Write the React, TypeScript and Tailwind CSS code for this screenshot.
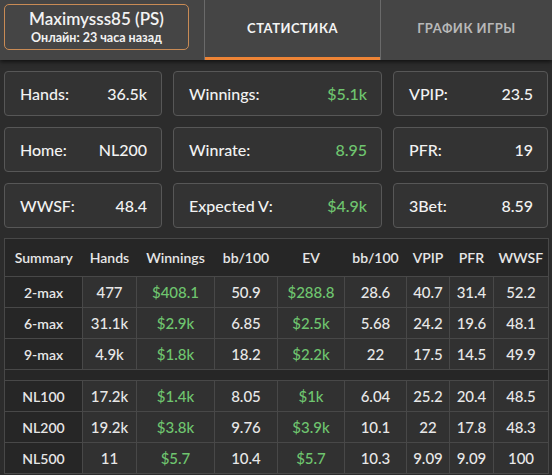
import React from "react";

const cards: [string, string, boolean][] = [
  ["Hands:", "36.5k", false],
  ["Winnings:", "$5.1k", true],
  ["VPIP:", "23.5", false],
  ["Home:", "NL200", false],
  ["Winrate:", "8.95", true],
  ["PFR:", "19", false],
  ["WWSF:", "48.4", false],
  ["Expected V:", "$4.9k", true],
  ["3Bet:", "8.59", false],
];

const headers = ["Summary", "Hands", "Winnings", "bb/100", "EV", "bb/100", "VPIP", "PFR", "WWSF"];
const widths = [78, 54, 78, 63, 67, 62, 43, 44, 55];

const group1 = [
  ["2-max", "477", "$408.1", "50.9", "$288.8", "28.6", "40.7", "31.4", "52.2"],
  ["6-max", "31.1k", "$2.9k", "6.85", "$2.5k", "5.68", "24.2", "19.6", "48.1"],
  ["9-max", "4.9k", "$1.8k", "18.2", "$2.2k", "22", "17.5", "14.5", "49.9"],
];
const group2 = [
  ["NL100", "17.2k", "$1.4k", "8.05", "$1k", "6.04", "25.2", "20.4", "48.5"],
  ["NL200", "19.2k", "$3.8k", "9.76", "$3.9k", "10.1", "22", "17.8", "48.3"],
  ["NL500", "11", "$5.7", "10.4", "$5.7", "10.3", "9.09", "9.09", "100"],
];

function Row({ r }: { r: string[] }) {
  return (
    <tr className="h-[31px]">
      {r.map((c, i) => (
        <td
          key={i}
          className={
            "border border-[#484848] text-center p-0 " +
            (i === 0
              ? "bg-[#262626] text-[14px] font-semibold text-[#e6e6e6]"
              : "bg-[#313131] text-[15px] font-medium " + (i === 2 || i === 4 ? "text-[#6fc56f]" : "text-[#e8e8e8]"))
          }
        >
          {c}
        </td>
      ))}
    </tr>
  );
}

export default function App() {
  return (
    <div
      className="w-[552px] h-[475px] bg-[#2c2c2c] overflow-hidden"
      style={{ fontFamily: "Lato, 'Noto Sans', sans-serif" }}
    >
      <div className="h-[60px] bg-[#454545] flex relative shadow-[0_2px_4px_rgba(0,0,0,0.6)]">
        <div className="ml-[4px] mt-[4px] w-[185px] h-[46px] border border-[#c98b55] rounded-[5px] flex flex-col items-center justify-center">
          <div className="text-[17px] font-semibold text-[#f2f2f2] leading-[19px]">Maximysss85 (PS)</div>
          <div className="text-[12.5px] font-bold text-[#f2f2f2] leading-[16px] mt-[2px]">Онлайн: 23 часа назад</div>
        </div>
        <div className="ml-[15px] w-[176px] h-full border-l border-[#6a6a6a] flex items-center justify-center relative">
          <span className="text-[13px] font-bold tracking-[0.5px] text-[#f4f4f4] pb-[3px]">СТАТИСТИКА</span>
          <div className="absolute left-0 right-0 bottom-0 h-[3px] bg-[#ee8436]" />
        </div>
        <div className="flex-1 h-full border-l border-[#6a6a6a] flex items-center justify-center">
          <span className="text-[13px] font-bold tracking-[0.5px] text-[#b8b8b8] pb-[3px]">ГРАФИК ИГРЫ</span>
        </div>
      </div>

      <div className="px-[4px] pt-[11px]">
        <div className="grid grid-cols-[158px_209px_155px] gap-x-[11px] gap-y-[11px]">
          {cards.map(([l, v, g], i) => (
            <div
              key={i}
              className="h-[45px] bg-[#333333] border border-[#575757] rounded-[4px] flex items-center justify-between pl-[15px] pr-[14px]"
            >
              <span className="text-[16px] font-medium text-[#f2f2f2]">{l}</span>
              <span className={"text-[16px] font-medium " + (g ? "text-[#6fc56f]" : "text-[#f2f2f2]")}>{v}</span>
            </div>
          ))}
        </div>

        <table className="mt-[10px] border-collapse table-fixed w-[544px]">
          <colgroup>
            {widths.map((w, i) => (
              <col key={i} style={{ width: w }} />
            ))}
          </colgroup>
          <thead>
            <tr className="h-[38px] bg-[#262626]">
              {headers.map((h, i) => (
                <th
                  key={i}
                  className="border-y border-[#484848] first:border-l last:border-r text-center text-[14px] font-semibold text-[#e6e6e6] p-0"
                >
                  {h}
                </th>
              ))}
            </tr>
          </thead>
          <tbody>
            {group1.map((r, i) => (
              <Row key={i} r={r} />
            ))}
            <tr className="h-[11px]">
              <td colSpan={9} className="bg-[#262626] border border-[#484848] p-0" />
            </tr>
            {group2.map((r, i) => (
              <Row key={i} r={r} />
            ))}
          </tbody>
        </table>
      </div>
    </div>
  );
}
